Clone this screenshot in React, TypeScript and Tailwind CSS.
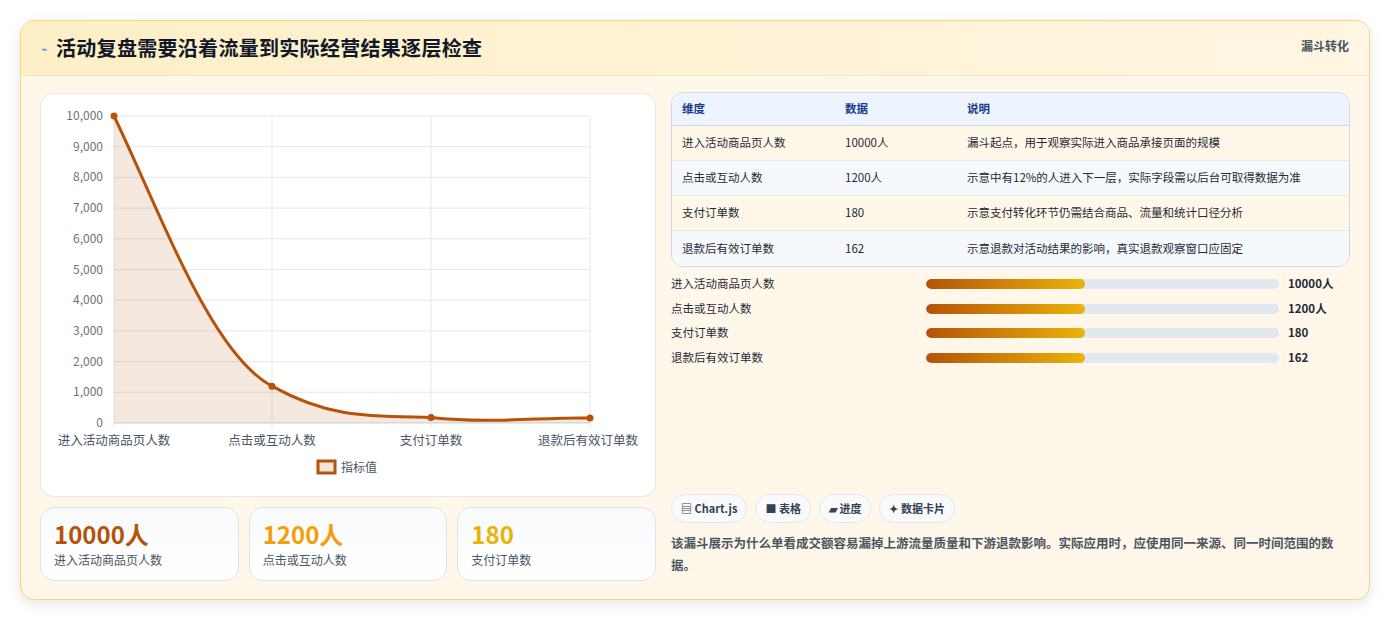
import React from "react";

const font = { fontFamily: '"Noto Sans CJK SC", "Noto Sans", sans-serif' };

const rows = [
  ["进入活动商品页人数", "10000人", "漏斗起点，用于观察实际进入商品承接页面的规模"],
  ["点击或互动人数", "1200人", "示意中有12%的人进入下一层，实际字段需以后台可取得数据为准"],
  ["支付订单数", "180", "示意支付转化环节仍需结合商品、流量和统计口径分析"],
  ["退款后有效订单数", "162", "示意退款对活动结果的影响，真实退款观察窗口应固定"],
];

function Chart() {
  const X = [73, 231, 390, 549];
  const Y = (v: number) => 329 - (307 * v) / 10000;
  const pts = [10000, 1200, 180, 162].map((v, i) => [X[i], Y(v)]);
  const d = `M${pts[0][0]},${pts[0][1]} C120,120 170,260 ${pts[1][0]},${pts[1][1]} C290,325 330,322 ${pts[2][0]},${pts[2][1]} C450,330 500,323 ${pts[3][0]},${pts[3][1]}`;
  const ticks = [0, 1000, 2000, 3000, 4000, 5000, 6000, 7000, 8000, 9000, 10000];
  const labels = ["进入活动商品页人数", "点击或互动人数", "支付订单数", "退款后有效订单数"];
  return (
    <svg width="615" height="403" style={font}>
      {ticks.map((t) => (
        <g key={t}>
          <line x1={73} x2={549} y1={Y(t)} y2={Y(t)} stroke={t === 0 ? "#cbd5e1" : "#e5e7eb"} />
          <text x={62} y={Y(t) + 4} textAnchor="end" fontSize="12" fill="#6b7280">{t.toLocaleString("en-US")}</text>
        </g>
      ))}
      {X.map((x) => (
        <line key={x} x1={x} x2={x} y1={22} y2={334} stroke="#e5e7eb" />
      ))}
      <path d={`${d} L549,329 L73,329 Z`} fill="#b45309" fillOpacity="0.13" />
      <path d={d} fill="none" stroke="#b45309" strokeWidth="3" />
      {pts.map((p, i) => (
        <circle key={i} cx={p[0]} cy={p[1]} r="3.5" fill="#b45309" />
      ))}
      {labels.map((l, i) => (
        <text key={l} x={i === 3 ? 547 : i === 0 ? 73 : X[i]} y={351} textAnchor="middle" fontSize="12.5" fill="#4b5563">{l}</text>
      ))}
      <rect x={277} y={367} width={17} height={12} fill="#b45309" fillOpacity="0.15" stroke="#b45309" strokeWidth="3" />
      <text x={300} y={378} fontSize="12" fill="#4b5563">指标值</text>
    </svg>
  );
}

export default function App() {
  return (
    <div className="w-[1390px] h-[621px] bg-white pt-[20px] px-[20px]" style={font}>
      <div className="w-[1350px] h-[580px] rounded-[14px] border border-[#f5d77a] bg-[#fff8ea] overflow-hidden shadow-[0_4px_14px_rgba(0,0,0,0.1)]">
        <div className="h-[55px] flex items-center justify-between px-[20px] bg-gradient-to-r from-[#fdefc6] to-[#fff6e3] border-b border-[#f6e6bf]">
          <div className="flex items-center gap-[8px]">
            <span className="text-[#3b82f6] text-[11px]">⌁</span>
            <span className="text-[20px] font-bold text-[#111827] tracking-[0.3px]">活动复盘需要沿着流量到实际经营结果逐层检查</span>
          </div>
          <span className="self-start mt-[16px] text-[12px] font-semibold text-[#4b5563]">漏斗转化</span>
        </div>
        <div className="flex gap-[15px] px-[19px] pt-[17px]">
          <div className="w-[616px] flex flex-col gap-[10px]">
            <div className="h-[404px] rounded-[14px] bg-white border border-[#e5e7eb]">
              <Chart />
            </div>
            <div className="grid grid-cols-3 gap-[10px]">
              {[
                ["10000人", "text-[#b45309]", "进入活动商品页人数"],
                ["1200人", "text-[#f59e0b]", "点击或互动人数"],
                ["180", "text-[#eab308]", "支付订单数"],
              ].map(([v, c, l]) => (
                <div key={l} className="h-[74px] rounded-[14px] border border-[#dbe4f0] bg-gradient-to-b from-[#f8fafc] to-white px-[13px] pt-[10px]">
                  <div className={`text-[24px] font-bold leading-[32px] ${c}`}>{v}</div>
                  <div className="text-[12px] text-[#4b5563] mt-[1px]">{l}</div>
                </div>
              ))}
            </div>
          </div>
          <div className="flex-1 flex flex-col">
            <div className="rounded-[12px] border border-[#cfd8e3] overflow-hidden text-[11.5px] -mt-[1px]">
              <div className="flex h-[33px] items-center bg-[#edf4fd] text-[#1e3a8a] font-semibold border-b border-[#cfd8e3]">
                <div className="w-[173px] pl-[10px]">维度</div>
                <div className="w-[122px]">数据</div>
                <div>说明</div>
              </div>
              {rows.map((r, i) => (
                <div key={r[0]} className={`flex h-[35px] items-center text-[#1f2937] ${i % 2 === 0 ? "bg-[#fff8e8]" : "bg-[#f6f9fc]"} ${i < 3 ? "border-b border-[#e5e7eb]" : ""}`}>
                  <div className="w-[173px] pl-[10px]">{r[0]}</div>
                  <div className="w-[122px]">{r[1]}</div>
                  <div>{r[2]}</div>
                </div>
              ))}
            </div>
            <div className="flex flex-col gap-[10.5px] mt-[10px]">
              {rows.map((r) => (
                <div key={r[0]} className="flex items-center h-[14px] text-[11.5px] text-[#1f2937]">
                  <div className="w-[255px]">{r[0]}</div>
                  <div className="w-[353px] h-[10px] rounded-full bg-[#e2e8f0] overflow-hidden">
                    <div className="w-[45%] h-full rounded-full bg-gradient-to-r from-[#b45309] to-[#eab308]" />
                  </div>
                  <div className="ml-[9px] font-bold">{r[1]}</div>
                </div>
              ))}
            </div>
            <div className="flex gap-[8px] mt-[129px]">
              {["▤ Chart.js", "■ 表格", "▰ 进度", "✦ 数据卡片"].map((t) => (
                <span key={t} className="h-[29px] px-[9px] flex items-center rounded-full border border-[#e5e7eb] bg-[#f8fafc] text-[11px] font-semibold text-[#374151]">{t}</span>
              ))}
            </div>
            <p className="mt-[9px] pr-[12px] text-[12.5px] leading-[22px] font-semibold text-[#4b5563]">
              该漏斗展示为什么单看成交额容易漏掉上游流量质量和下游退款影响。实际应用时，应使用同一来源、同一时间范围的数据。
            </p>
          </div>
        </div>
      </div>
    </div>
  );
}
